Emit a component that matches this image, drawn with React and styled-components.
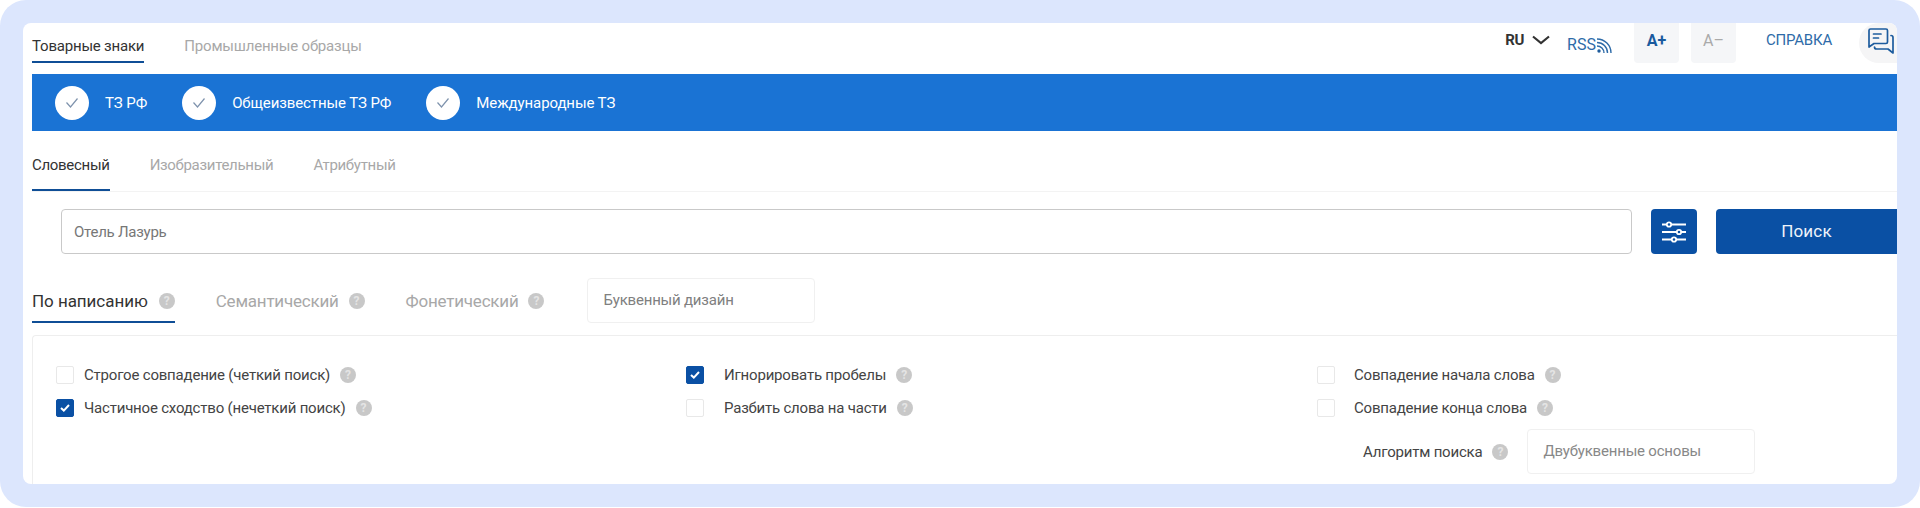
import React from 'react';
import styled, { createGlobalStyle } from 'styled-components';

const FONT = 'Roboto, "Noto Sans", sans-serif';

const COLLECTIONS = ['ТЗ РФ', 'Общеизвестные ТЗ РФ', 'Международные ТЗ'];
const KINDS = ['Словесный', 'Изобразительный', 'Атрибутный'];

const OPTION_COLUMNS = [
  {
    gap: 10,
    options: [
      { label: 'Строгое совпадение (четкий поиск)', checked: false },
      { label: 'Частичное сходство (нечеткий поиск)', checked: true },
    ],
  },
  {
    gap: 20,
    options: [
      { label: 'Игнорировать пробелы', checked: true },
      { label: 'Разбить слова на части', checked: false },
    ],
  },
  {
    gap: 19,
    options: [
      { label: 'Совпадение начала слова', checked: false },
      { label: 'Совпадение конца слова', checked: false },
    ],
  },
];

export default function App() {
  return (
    <>
      <GlobalStyle />
      <Frame>
        <Card>
          <TopBar>
            <TopTabs>
              <TopTab $active>Товарные знаки</TopTab>
              <TopTab>Промышленные образцы</TopTab>
            </TopTabs>
            <TopTools>
              <Lang>
                RU
                <ChevronIcon />
              </Lang>
              <Rss>
                RSS
                <RssIcon />
              </Rss>
              <SizeButton $active>A+</SizeButton>
              <SizeButton>A–</SizeButton>
              <HelpLink>СПРАВКА</HelpLink>
              <ChatButton>
                <ChatIcon />
              </ChatButton>
            </TopTools>
          </TopBar>

          <BlueBar>
            {COLLECTIONS.map(name => (
              <Collection key={name}>
                <CollectionMark>
                  <svg width="14" height="12" viewBox="0 0 14 12" fill="none" stroke="#7f93ad" strokeWidth="1.2">
                    <path d="M1.5 5.5 L5.5 10 L12.5 1.5" />
                  </svg>
                </CollectionMark>
                {name}
              </Collection>
            ))}
          </BlueBar>

          <KindTabs>
            {KINDS.map((name, index) => (
              <KindTab key={name} $active={index === 0}>
                {name}
              </KindTab>
            ))}
          </KindTabs>

          <SearchRow>
            <SearchInput>Отель Лазурь</SearchInput>
            <FilterButton>
              <SlidersIcon />
            </FilterButton>
            <SearchButton>Поиск</SearchButton>
          </SearchRow>

          <ModeRow>
            <ModeTab $active>
              По написанию
              <Hint>?</Hint>
            </ModeTab>
            <ModeTab>
              Семантический
              <Hint>?</Hint>
            </ModeTab>
            <ModeTab>
              Фонетический
              <Hint>?</Hint>
            </ModeTab>
            <LetterSelect>Буквенный дизайн</LetterSelect>
          </ModeRow>

          <OptionsPanel>
            {OPTION_COLUMNS.map((column, index) => (
              <OptionColumn key={index}>
                {column.options.map(option => (
                  <Option key={option.label}>
                    <Checkbox $checked={option.checked} $gap={column.gap}>
                      {option.checked && (
                        <svg width="10" height="8" viewBox="0 0 10 8" fill="none" stroke="#fff" strokeWidth="2">
                          <path d="M1 4 L3.8 6.6 L9 1" />
                        </svg>
                      )}
                    </Checkbox>
                    {option.label}
                    <Hint>?</Hint>
                  </Option>
                ))}
                {index === 2 && (
                  <AlgorithmRow>
                    Алгоритм поиска
                    <Hint>?</Hint>
                    <AlgorithmSelect>Двубуквенные основы</AlgorithmSelect>
                  </AlgorithmRow>
                )}
              </OptionColumn>
            ))}
          </OptionsPanel>
        </Card>
      </Frame>
    </>
  );
}

function ChevronIcon() {
  return (
    <svg width="18" height="10" viewBox="0 0 18 10" fill="none" stroke="#333" strokeWidth="2.2">
      <path d="M1 1.5 L9 8 L17 1.5" />
    </svg>
  );
}

function RssIcon() {
  return (
    <svg width="16" height="16" viewBox="0 0 16 16" fill="none" stroke="#2e6ba8" strokeWidth="1.4">
      <circle cx="3" cy="13" r="1.7" fill="#1f5c9c" stroke="none" />
      <path d="M1 8 A7 7 0 0 1 8 15" />
      <path d="M1 4.5 A10.5 10.5 0 0 1 11.5 15" />
      <path d="M1 1 A14 14 0 0 1 15 15" />
    </svg>
  );
}

function ChatIcon() {
  return (
    <svg width="27" height="26" viewBox="0 0 27 26" fill="none" stroke="#1d5c9e" strokeWidth="1.7" strokeLinejoin="round" strokeLinecap="round">
      <path d="M2 2.5 Q2 1 3.5 1 H19 Q20.5 1 20.5 2.5 V14 Q20.5 15.5 19 15.5 H7 L2 19 Z" />
      <path d="M6.5 6 H14" />
      <path d="M6.5 10 H11.5" />
      <path d="M24 7.5 Q26 7.5 26 9.5 V25 L21 21 H9.5 Q7.5 21 7.5 19" />
    </svg>
  );
}

function SlidersIcon() {
  return (
    <svg width="24" height="22" viewBox="0 0 24 22" fill="#0a50a4" stroke="#fff" strokeWidth="1.8">
      <path d="M0 3.5 H24" />
      <path d="M0 11 H24" />
      <path d="M0 18.5 H24" />
      <circle cx="7" cy="3.5" r="2.2" />
      <circle cx="17" cy="11" r="2.2" />
      <circle cx="12" cy="18.5" r="2.2" />
    </svg>
  );
}

const GlobalStyle = createGlobalStyle`
  html, body {
    margin: 0;
    padding: 0;
    background: #fff;
  }
  body {
    font-family: ${FONT};
    overflow: hidden;
  }
`;

const Frame = styled.div`
  box-sizing: border-box;
  height: 507px;
  padding: 23px;
  background: #dce6fd;
  border-radius: 26px;
`;

const Card = styled.div`
  display: flex;
  flex-direction: column;
  height: 461px;
  padding-left: 9px;
  background: #fff;
  border-radius: 8px;
  overflow: hidden;
`;

const TopBar = styled.div`
  display: flex;
  justify-content: space-between;
  height: 51px;
`;

const TopTabs = styled.div`
  display: flex;
  gap: 40px;
  align-items: flex-start;
`;

const TopTab = styled.div`
  height: 38px;
  line-height: 46px;
  font-size: 15px;
  letter-spacing: -0.2px;
  color: ${p => (p.$active ? '#333' : '#a8a8a8')};
  border-bottom: 2px solid ${p => (p.$active ? '#0f4e96' : 'transparent')};
`;

const TopTools = styled.div`
  display: flex;
  align-items: flex-start;
`;

const Lang = styled.span`
  display: flex;
  align-items: center;
  gap: 8px;
  height: 34px;
  font-size: 15px;
  font-weight: 700;
  letter-spacing: -0.3px;
  color: #333;
`;

const Rss = styled.span`
  display: flex;
  align-items: center;
  margin: 12px 22px 0 17px;
  font-size: 16px;
  line-height: 20px;
  color: #2e6ba8;

  svg {
    margin-top: 1px;
  }
`;

const SizeButton = styled.div`
  display: flex;
  align-items: center;
  justify-content: center;
  box-sizing: border-box;
  width: 45px;
  height: 40px;
  margin-right: 12px;
  padding-bottom: 6px;
  font-size: 16px;
  font-weight: ${p => (p.$active ? 700 : 400)};
  color: ${p => (p.$active ? '#1a5a9e' : '#aaa')};
  background: #f5f6f8;
  border-radius: 0 0 4px 4px;
`;

const HelpLink = styled.span`
  margin: 7px 27px 0 18px;
  font-size: 15px;
  line-height: 20px;
  letter-spacing: -0.2px;
  color: #2e6ba8;
`;

const ChatButton = styled.div`
  display: flex;
  align-items: flex-start;
  justify-content: flex-end;
  box-sizing: border-box;
  width: 38px;
  height: 40px;
  padding: 5px 3px 0 0;
  background: #f5f5f6;
  border-radius: 20px 0 0 20px;
`;

const BlueBar = styled.div`
  display: flex;
  align-items: center;
  gap: 35px;
  height: 57px;
  padding-left: 23px;
  background: #1a73d4;
`;

const Collection = styled.div`
  display: flex;
  align-items: center;
  gap: 16px;
  font-size: 15px;
  letter-spacing: -0.1px;
  color: #fff;
`;

const CollectionMark = styled.span`
  display: flex;
  align-items: center;
  justify-content: center;
  width: 34px;
  height: 34px;
  background: #fff;
  border-radius: 50%;
`;

const KindTabs = styled.div`
  display: flex;
  gap: 40px;
  height: 60px;
  border-bottom: 1px solid #f3f3f3;
`;

const KindTab = styled.div`
  box-sizing: border-box;
  height: 60px;
  line-height: 68px;
  font-size: 15px;
  letter-spacing: -0.3px;
  color: ${p => (p.$active ? '#333' : '#a8a8a8')};
  border-bottom: 2px solid ${p => (p.$active ? '#0f4e96' : 'transparent')};
`;

const SearchRow = styled.div`
  display: flex;
  height: 45px;
  margin-top: 17px;
  padding-left: 29px;
`;

const SearchInput = styled.div`
  flex: 1;
  box-sizing: border-box;
  height: 45px;
  padding-left: 12px;
  line-height: 45px;
  font-size: 15px;
  letter-spacing: -0.25px;
  color: #777;
  border: 1px solid #c9c9c9;
  border-radius: 4px;
`;

const FilterButton = styled.div`
  display: flex;
  align-items: center;
  justify-content: center;
  width: 46px;
  height: 45px;
  margin-left: 19px;
  background: #0a50a4;
  border-radius: 4px;
`;

const SearchButton = styled.div`
  width: 181px;
  height: 45px;
  margin-left: 19px;
  line-height: 45px;
  text-align: center;
  font-size: 17px;
  letter-spacing: 0.2px;
  color: #eef3fa;
  background: #0a50a4;
  border-radius: 4px 0 0 4px;
`;

const ModeRow = styled.div`
  display: flex;
  align-items: flex-start;
  height: 57px;
  margin-top: 24px;
`;

const ModeTab = styled.div`
  display: flex;
  align-items: center;
  gap: ${p => (p.$active ? '11px' : '10px')};
  box-sizing: border-box;
  height: 45px;
  margin-right: 41px;
  padding-top: 2px;
  font-size: 17px;
  letter-spacing: ${p => (p.$active ? '-0.05px' : '-0.22px')};
  color: ${p => (p.$active ? '#333' : '#a8a8a8')};
  border-bottom: 2px solid ${p => (p.$active ? '#0f4e96' : 'transparent')};
`;

const Hint = styled.span`
  display: inline-flex;
  align-items: center;
  justify-content: center;
  flex: none;
  width: 16px;
  height: 16px;
  font-size: 12px;
  font-weight: 700;
  letter-spacing: 0;
  color: #e4e4e4;
  background: #c8c8c8;
  border-radius: 50%;
`;

const LetterSelect = styled.div`
  box-sizing: border-box;
  width: 228px;
  height: 45px;
  margin-left: 2px;
  padding-left: 15px;
  line-height: 43px;
  font-size: 15px;
  letter-spacing: -0.2px;
  color: #808080;
  border: 1px solid #f0f0f0;
  border-radius: 4px;
`;

const OptionsPanel = styled.div`
  display: grid;
  grid-template-columns: 630px 631px 1fr;
  flex: 1;
  box-sizing: border-box;
  padding: 30px 0 0 23px;
  border: 1px solid #eee;
  border-right: 0;
  border-bottom: 0;
  border-radius: 4px 0 0 0;
`;

const OptionColumn = styled.div`
  display: flex;
  flex-direction: column;
  gap: 15px;
  align-items: flex-start;
`;

const Option = styled.div`
  display: flex;
  align-items: center;
  gap: 10px;
  height: 18px;
  font-size: 15px;
  letter-spacing: -0.2px;
  color: #444;
`;

const Checkbox = styled.span`
  display: flex;
  align-items: center;
  justify-content: center;
  box-sizing: border-box;
  width: 18px;
  height: 18px;
  margin-right: ${p => p.$gap - 10}px;
  background: ${p => (p.$checked ? '#0a50a4' : '#fff')};
  border: 1px solid ${p => (p.$checked ? '#0a50a4' : '#e8e8e8')};
  border-radius: 2px;
`;

const AlgorithmRow = styled.div`
  display: flex;
  align-items: center;
  gap: 10px;
  height: 45px;
  margin: -3px 0 0 46px;
  font-size: 15px;
  letter-spacing: -0.2px;
  color: #444;
`;

const AlgorithmSelect = styled.div`
  box-sizing: border-box;
  width: 228px;
  height: 45px;
  margin-left: 9px;
  padding-left: 15px;
  line-height: 43px;
  color: #888;
  border: 1px solid #f0f0f0;
  border-radius: 4px;
`;
